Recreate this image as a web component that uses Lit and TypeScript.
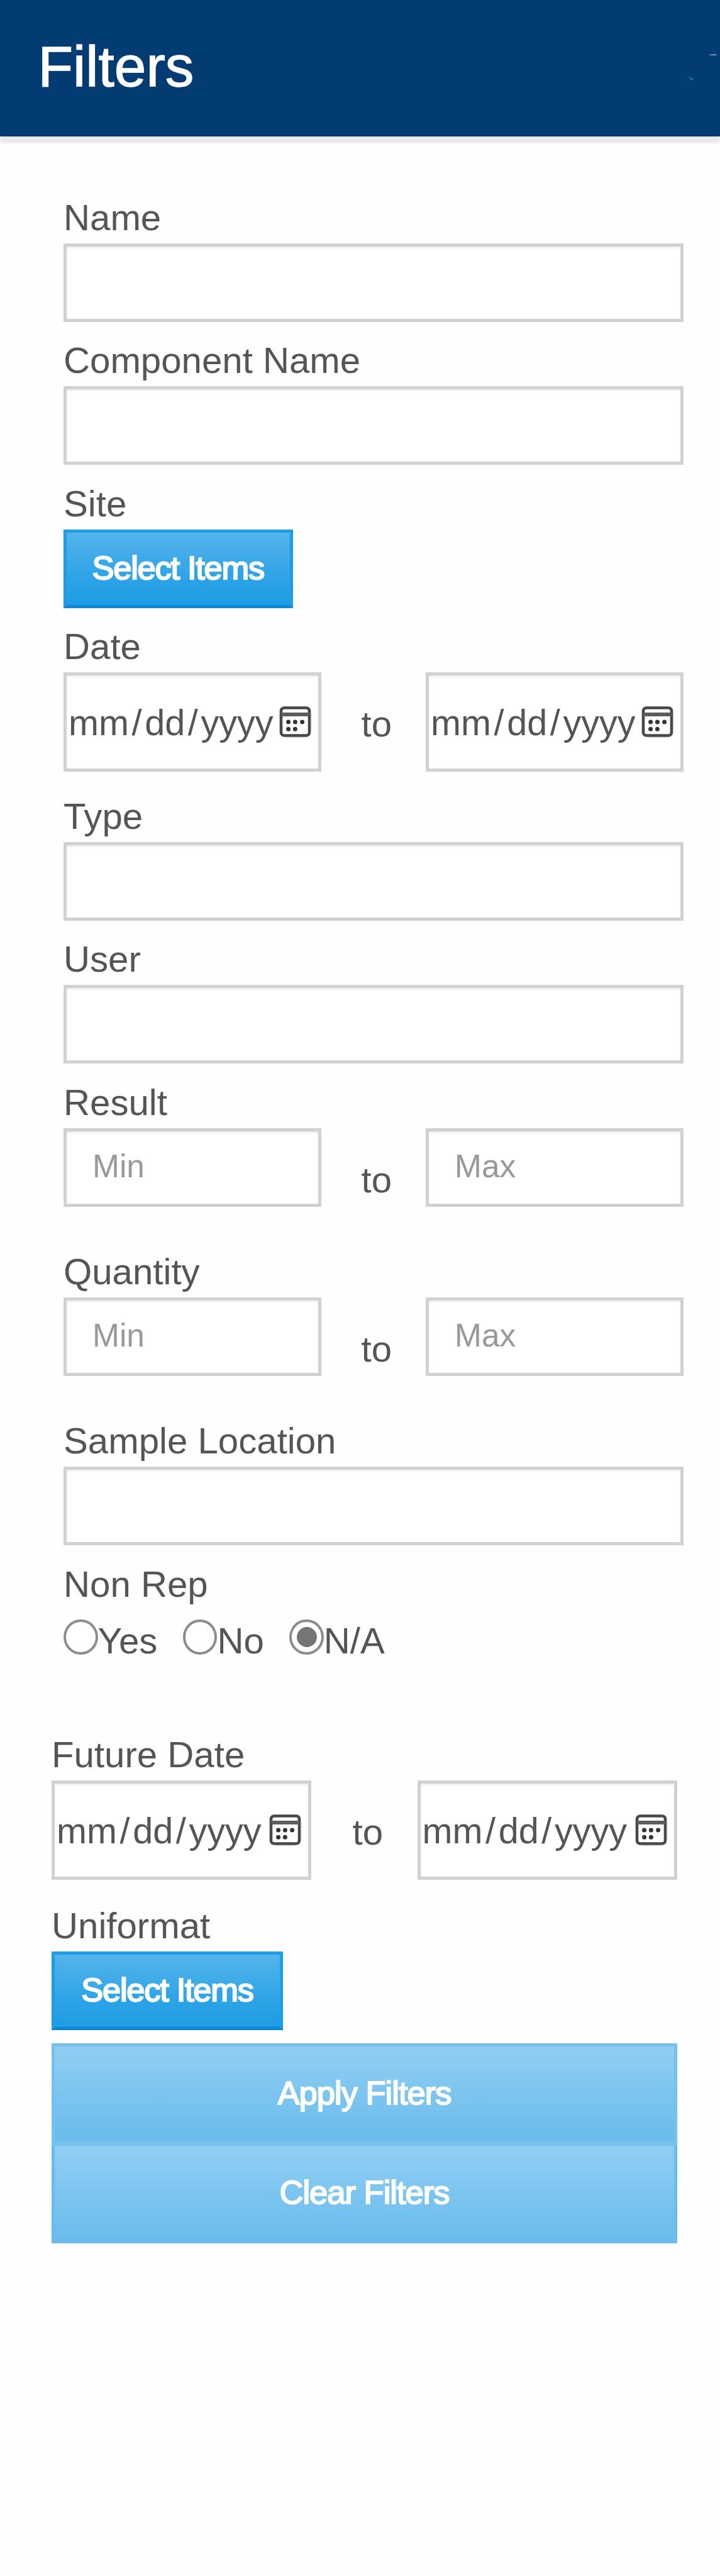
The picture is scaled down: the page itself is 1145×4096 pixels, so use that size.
import { LitElement, html, css, svg } from "lit";
import { customElement, property } from "lit/decorators.js";

const calendar = html`<svg class="cal" viewBox="0 0 52 52">
  ${svg`<path d="M8 3.5h35a5 5 0 0 1 5 5v34a5 5 0 0 1-5 5H8a5 5 0 0 1-5-5v-34a5 5 0 0 1 5-5z" fill="none" stroke="#484848" stroke-width="4.6"/>
  <path d="M3 14h45" stroke="#5c5c5c" stroke-width="6"/>
  <path d="M11 50.8h30M51.2 12v28" stroke="#ddd" stroke-width="1.6"/>
  <g fill="#333"><circle cx="14.6" cy="26" r="3.5"/><circle cx="25.4" cy="26" r="3.5"/><circle cx="36.6" cy="26" r="3.5"/><circle cx="14.6" cy="37.3" r="3.5"/><circle cx="25.4" cy="37.3" r="3.5"/></g>`}
</svg>`;

@customElement("date-box")
class DateBox extends LitElement {
  static styles = css`
    :host { display: block; box-sizing: border-box; height: 158px; border: 5px solid #d1d1d1; box-shadow: inset 0 3px 3px #f0f0f0; background: #fff; }
    .row { display: flex; align-items: flex-start; height: 100%; }
    .text { display: flex; flex: none; gap: 4.6px; width: var(--text-width, 338px); padding: 35px 0 0 3px; box-sizing: border-box; font-size: 57.6px; line-height: 80px; white-space: nowrap; }
    .cal { flex: none; width: 52px; height: 52px; margin-top: 47.5px; }
  `;
  render() {
    return html`<div class="row">
      <div class="text"><span>mm</span><span>/</span><span>dd</span><span>/</span><span>yyyy</span></div>
      ${calendar}
    </div>`;
  }
}

@customElement("filter-field")
class FilterField extends LitElement {
  @property() label = "";
  static styles = css`
    :host { display: block; }
    .label { height: 80px; line-height: 77px; white-space: nowrap; }
  `;
  render() {
    return html`<div class="label">${this.label}</div><slot></slot>`;
  }
}

@customElement("app-root")
class AppRoot extends LitElement {
  static styles = css`
    :host { display: block; height: 4096px; overflow: hidden; background: #fefefe; color: #555; font-family: "Liberation Sans", Arial, sans-serif; font-size: 58.2px; }
    .header { position: relative; box-sizing: border-box; height: 217px; padding: 49px 0 0 60.5px; background: #033c73; color: #fff; font-size: 91px; line-height: 113px; -webkit-text-stroke: 1.4px #fff; box-shadow: 0 5px 2px #efebe8, 0 10px 5px #e6e6e6; }
    .specks { position: absolute; right: 0; top: 80px; width: 60px; height: 56px; }
    .main { padding: 89.5px 58.5px 0 101px; }
    .lower { padding: 0 68px 0 82px; --text-width: 341px; }
    .input { box-sizing: border-box; height: 125px; border: 5px solid #d1d1d1; background: #fff; box-shadow: inset 0 3px 3px #f0f0f0; }
    .ph { padding-left: 41px; line-height: 111px; font-size: 51.5px; color: #999; }
    .g23 { margin-bottom: 22.6px; }
    .g31 { margin-bottom: 31.4px; }
    .lower .g31 { margin-bottom: 33.5px; }
    .g65 { margin-bottom: 64.3px; }
    .pair { display: grid; grid-template-columns: 409.5px 1fr 409.5px; align-items: start; }
    .lower .pair { grid-template-columns: 413px 1fr 413.5px; }
    .to { padding-left: 64px; line-height: 80px; margin-top: 42px; }
    .lower .to { padding-left: 65.5px; }
    .to.date { margin-top: 42px; }
    .btn { box-sizing: border-box; display: flex; justify-content: center; height: 125px; border: 5px solid #1f9ce6; border-bottom-color: #0b87d6; background: linear-gradient(#54b4eb, #2fa4e7 60%, #1d9ce5); color: #fff; font-size: 52.5px; -webkit-text-stroke: 2.2px #fff; letter-spacing: -1.3px; line-height: 112px; width: 364.5px; }
    .lower .btn { width: 368px; }
    .radios { display: flex; align-items: flex-start; height: 191.4px; }
    .radio { display: flex; }
    .radio + .radio { margin-left: 40.5px; }
    .dot { box-sizing: border-box; flex: none; display: flex; align-items: center; justify-content: center; width: 54.5px; height: 55.5px; margin-top: 15.3px; border: 4px solid #8c8c8c; border-radius: 50%; background: #fff; }
    .dot.on::before { content: ""; width: 32px; height: 32px; border-radius: 50%; background: #757575; }
    .opt { line-height: 80px; padding-top: 8.5px; }
    .actions { display: flex; flex-direction: column; margin-top: 20.8px; }
    .act { box-sizing: border-box; height: 163px; border: 5px solid #74c1ee; border-bottom-width: 8px; background: linear-gradient(#92cef3, #82c8f1 35%, #6abbec); color: #fff; text-align: center; font-size: 52.5px; -webkit-text-stroke: 2px #fff; letter-spacing: -1px; line-height: 147px; }
    .act.last { height: 155.5px; border: 5px solid #6bbcee; border-top: 0; line-height: 147px; }
  `;

  private pair(a: string, b: string) {
    return html`<div class="pair">
      <div class="input ph">${a}</div><div class="to">to</div><div class="input ph">${b}</div>
    </div>`;
  }

  private dates() {
    return html`<div class="pair"><date-box></date-box><div class="to date">to</div><date-box></date-box></div>`;
  }

  render() {
    return html`
      <div class="header">Filters
        <svg class="specks" viewBox="0 0 60 56">
          <path d="M42 7.2L46 6H53L56 7L53 8.2H46z" fill="#6f86a5"/>
          <path d="M10 41L16 44.500L17 47L14 47.500z" fill="#2a76b2"/>
          <path d="M7 41L14 47.500L13 49z" fill="#02346d"/>
        </svg>
      </div>
      <div class="main">
        <filter-field class="g23" label="Name"><div class="input"></div></filter-field>
        <filter-field class="g23" label="Component Name"><div class="input"></div></filter-field>
        <filter-field class="g23" label="Site"><div class="btn">Select Items</div></filter-field>
        <filter-field class="g31" label="Date">${this.dates()}</filter-field>
        <filter-field class="g23" label="Type"><div class="input"></div></filter-field>
        <filter-field class="g23" label="User"><div class="input"></div></filter-field>
        <filter-field class="g65" label="Result">${this.pair("Min", "Max")}</filter-field>
        <filter-field class="g65" label="Quantity">${this.pair("Min", "Max")}</filter-field>
        <filter-field class="g23" label="Sample Location"><div class="input"></div></filter-field>
        <filter-field label="Non Rep">
          <div class="radios">
            <div class="radio"><span class="dot"></span><span class="opt">Yes</span></div>
            <div class="radio"><span class="dot"></span><span class="opt">No</span></div>
            <div class="radio"><span class="dot on"></span><span class="opt">N/A</span></div>
          </div>
        </filter-field>
      </div>
      <div class="lower">
        <filter-field class="g31" label="Future Date">${this.dates()}</filter-field>
        <filter-field label="Uniformat"><div class="btn">Select Items</div></filter-field>
        <div class="actions"><div class="act">Apply Filters</div><div class="act last">Clear Filters</div></div>
      </div>`;
  }
}
